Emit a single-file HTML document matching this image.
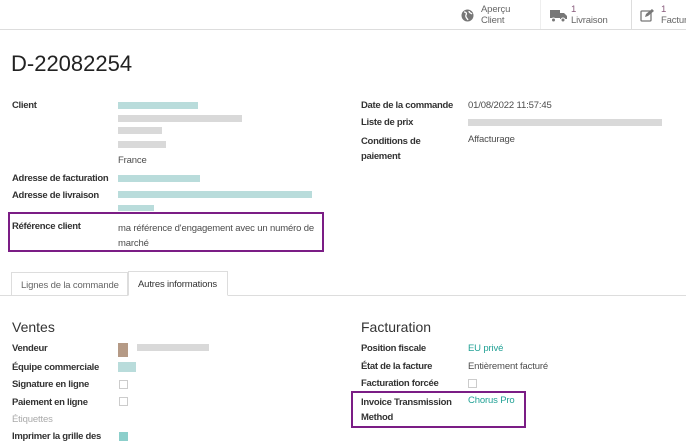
<!DOCTYPE html>
<html><head><meta charset="utf-8"><style>
*{margin:0;padding:0;box-sizing:border-box}
body{width:686px;height:439px;overflow:hidden;background:#fff;font-family:"Liberation Sans",sans-serif;font-size:9.5px;letter-spacing:-0.15px;color:#4c4c4c;position:relative}
.a{position:absolute;white-space:nowrap}
.b{font-weight:bold;color:#333;letter-spacing:-0.3px}
.bl{position:absolute;height:7px}
.t{background:#b9dcdb}.g{background:#d9d9d9}
.cb{position:absolute;width:9px;height:9px;border:1px solid #ccc;background:#fff}
.box{position:absolute;border:2px solid #7b1d85}
</style></head><body>
<div class="a" style="left:0;top:29px;width:686px;border-top:1px solid #ddd"></div>
<div class="a" style="left:540px;top:0;height:29px;border-left:1px solid #eee"></div>
<div class="a" style="left:631px;top:0;height:29px;border-left:1px solid #ddd"></div>
<svg class="a" style="left:461px;top:9px" width="13" height="13" viewBox="0 0 13 13"><circle cx="6.5" cy="6.5" r="6" fill="#777"/><path d="M3 3c2 0 3 1 2 3s1 3 2 5M8 2c0 2 2 2 3 3" stroke="#fff" stroke-width="1.3" fill="none"/></svg>
<div class="a" style="left:481px;top:4px;line-height:11px;color:#666">Aperçu<br>Client</div>
<svg class="a" style="left:550px;top:9px" width="17" height="13" viewBox="0 0 17 13"><rect x="0" y="1" width="10" height="8" fill="#777"/><path d="M10 4h4l3 3v3h-7z" fill="#777"/><circle cx="3.5" cy="11" r="2" fill="#777" stroke="#fff"/><circle cx="13" cy="11" r="2" fill="#777" stroke="#fff"/></svg>
<div class="a" style="left:571px;top:4px;line-height:11px;color:#666"><span style="color:#875a7b">1</span><br>Livraison</div>
<svg class="a" style="left:640px;top:8px" width="15" height="14" viewBox="0 0 15 14"><rect x="1" y="3" width="10" height="10" rx="1" fill="none" stroke="#777" stroke-width="1.3"/><path d="M5 9l1-3 6-5 2 2-6 5z" fill="#777"/></svg>
<div class="a" style="left:661px;top:4px;line-height:11px;color:#666"><span style="color:#875a7b">1</span><br>Factur</div>

<div class="a" style="left:11px;top:51px;font-size:22px;letter-spacing:0;color:#222">D-22082254</div>

<div class="a b" style="left:12px;top:100px">Client</div>
<div class="bl t" style="left:118px;top:102px;width:80px"></div>
<div class="bl g" style="left:118px;top:115px;width:124px"></div>
<div class="bl g" style="left:118px;top:127px;width:44px"></div>
<div class="bl g" style="left:118px;top:141px;width:48px"></div>
<div class="a" style="left:118px;top:155px">France</div>
<div class="a b" style="left:12px;top:173px">Adresse de facturation</div>
<div class="bl t" style="left:118px;top:175px;width:82px"></div>
<div class="a b" style="left:12px;top:190px">Adresse de livraison</div>
<div class="bl t" style="left:118px;top:191px;width:194px"></div>
<div class="bl t" style="left:118px;top:205px;width:36px;height:6px"></div>

<div class="a b" style="left:361px;top:100px">Date de la commande</div>
<div class="a" style="left:468px;top:100px">01/08/2022 11:57:45</div>
<div class="a b" style="left:361px;top:117px">Liste de prix</div>
<div class="bl g" style="left:468px;top:119px;width:194px"></div>
<div class="a b" style="left:361px;top:134px;line-height:15px">Conditions de<br>paiement</div>
<div class="a" style="left:468px;top:134px">Affacturage</div>

<div class="box" style="left:8px;top:212px;width:316px;height:40px"></div>
<div class="a b" style="left:12px;top:221px">Référence client</div>
<div class="a" style="left:118px;top:221px;line-height:15px">ma référence d'engagement avec un numéro de<br>marché</div>

<div class="a" style="left:0;top:295px;width:686px;border-top:1px solid #ddd"></div>
<div class="a" style="left:11px;top:272px;width:117px;height:24px;border:1px solid #ddd;border-bottom:none;padding:7px 0 0 9px;color:#666">Lignes de la commande</div>
<div class="a" style="left:128px;top:271px;width:100px;height:25px;border:1px solid #ddd;border-bottom:1px solid #fff;background:#fff;padding:7px 0 0 9px;color:#333">Autres informations</div>

<div class="a" style="left:12px;top:319px;font-size:14px;letter-spacing:0;color:#333">Ventes</div>
<div class="a b" style="left:12px;top:343px">Vendeur</div>
<div class="bl" style="left:118px;top:343px;width:10px;height:14px;background:#b59a86"></div>
<div class="bl g" style="left:137px;top:344px;width:72px"></div>
<div class="a b" style="left:12px;top:362px">Équipe commerciale</div>
<div class="bl t" style="left:118px;top:362px;width:18px;height:10px"></div>
<div class="a b" style="left:12px;top:379px">Signature en ligne</div>
<div class="cb" style="left:119px;top:380px"></div>
<div class="a b" style="left:12px;top:397px">Paiement en ligne</div>
<div class="cb" style="left:119px;top:397px"></div>
<div class="a" style="left:12px;top:414px;color:#aaa">Étiquettes</div>
<div class="a b" style="left:12px;top:431px">Imprimer la grille des</div>
<div class="cb" style="left:119px;top:432px;background:#8ccfcb;border-color:#8ccfcb"></div>

<div class="a" style="left:361px;top:319px;font-size:14px;letter-spacing:0;color:#333">Facturation</div>
<div class="a b" style="left:361px;top:343px">Position fiscale</div>
<div class="a" style="left:468px;top:343px;color:#21a195">EU privé</div>
<div class="a b" style="left:361px;top:361px">État de la facture</div>
<div class="a" style="left:468px;top:361px">Entièrement facturé</div>
<div class="a b" style="left:361px;top:378px">Facturation forcée</div>
<div class="cb" style="left:468px;top:379px"></div>
<div class="box" style="left:351px;top:391px;width:175px;height:37px"></div>
<div class="a b" style="left:361px;top:395px;line-height:15px">Invoice Transmission<br>Method</div>
<div class="a" style="left:468px;top:395px;color:#21a195">Chorus Pro</div>
</body></html>
